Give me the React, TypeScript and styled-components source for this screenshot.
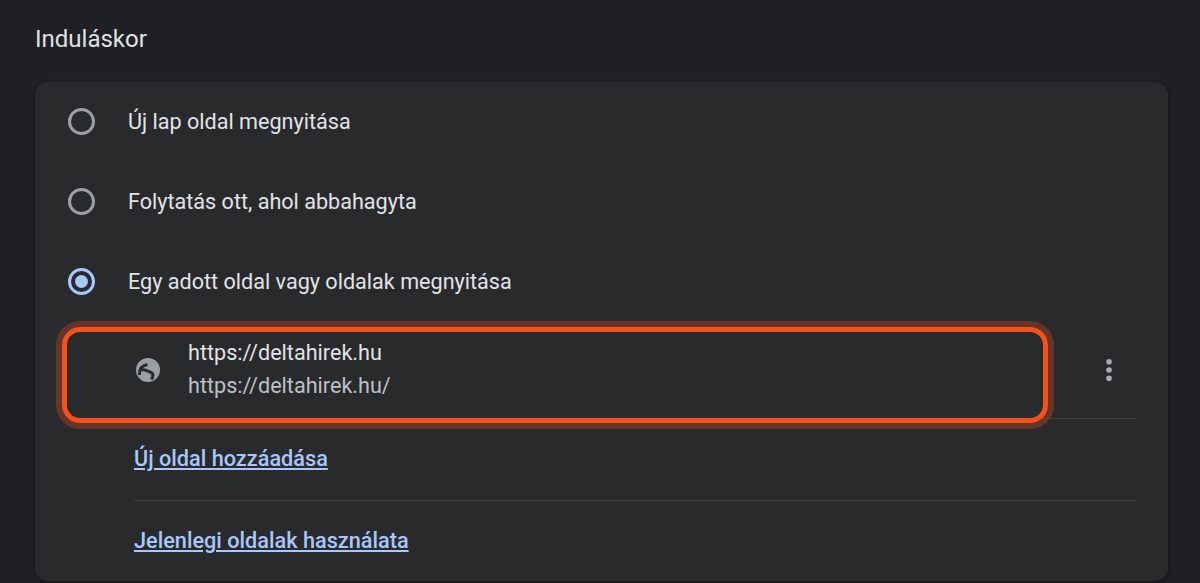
import React from 'react'
import styled, { createGlobalStyle } from 'styled-components'

const GlobalStyle = createGlobalStyle`
  html, body {
    margin: 0;
    padding: 0;
    background: #1f2023;
    overflow: hidden;
  }
  body {
    font-family: Roboto, "Liberation Sans", sans-serif;
  }
`

const Page = styled.div`
  box-sizing: border-box;
  height: 583px;
  width: 1200px;
  padding: 0 32px 0 35px;
  background: #1f2023;
  overflow: hidden;
`

const Heading = styled.h2`
  margin: 0;
  height: 82px;
  padding-top: 25px;
  box-sizing: border-box;
  color: #dfe1e5;
  font-size: 24px;
  font-weight: 400;
  line-height: 29px;
`

const Card = styled.section`
  height: 499px;
  background: #292a2c;
  border-radius: 13px;
  box-shadow: 0 1px 4px rgba(0, 0, 0, 0.45);
`

const RadioRow = styled.div`
  box-sizing: border-box;
  display: flex;
  align-items: center;
  height: 80px;
  padding: 0 0 2px 33px;
  gap: 33px;
  color: #e1e3e6;
  font-size: 21.6px;
`

const Radio = styled.span<{ $checked?: boolean }>`
  box-sizing: border-box;
  flex: none;
  width: 27px;
  height: 27px;
  border-radius: 50%;
  border: 3px solid ${p => (p.$checked ? '#a8c7fa' : '#9aa0a6')};
  display: flex;
  align-items: center;
  justify-content: center;

  &::after {
    content: '';
    display: ${p => (p.$checked ? 'block' : 'none')};
    width: 13px;
    height: 13px;
    border-radius: 50%;
    background: #a8c7fa;
  }
`

const Entry = styled.div`
  position: relative;
  display: flex;
  align-items: center;
  height: 96px;
  margin: 0 32px 0 99px;
  border-bottom: 1px solid #3f4043;
`

const Highlight = styled.div`
  position: absolute;
  left: -72px;
  right: 88px;
  top: 5px;
  height: 96px;
  box-sizing: border-box;
  border: 5px solid #f4511e;
  border-radius: 18px;
  box-shadow: 0 0 0 6px rgba(244, 81, 30, 0.3);
  pointer-events: none;
`

const Favicon = styled.svg`
  flex: none;
  width: 24px;
  height: 24px;
  margin-left: 2px;
`

const EntryText = styled.div`
  margin-left: 28px;
  padding-bottom: 3px;
  flex: 1;
`

const EntryTitle = styled.div`
  color: #e1e3e6;
  font-size: 21.6px;
  line-height: 33px;
`

const EntryUrl = styled.div`
  color: #bdc1c6;
  font-size: 21.6px;
  line-height: 33px;
`

const MoreButton = styled.svg`
  flex: none;
  width: 8px;
  height: 24px;
  margin-right: 23px;
`

const LinkRow = styled.div<{ $divided?: boolean }>`
  display: flex;
  align-items: center;
  box-sizing: border-box;
  height: ${p => (p.$divided ? '82px' : '81px')};
  padding-bottom: 2px;
  margin: 0 32px 0 99px;
  border-bottom: ${p => (p.$divided ? '1px solid #3f4043' : 'none')};
`

const ActionLink = styled.a`
  color: #a8c7fa;
  font-size: 21.7px;
  font-weight: 500;
  text-decoration: underline;
`

export default function App() {
  return (
    <Page>
      <GlobalStyle />
      <Heading>Induláskor</Heading>
      <Card>
        <RadioRow>
          <Radio />
          Új lap oldal megnyitása
        </RadioRow>
        <RadioRow>
          <Radio />
          Folytatás ott, ahol abbahagyta
        </RadioRow>
        <RadioRow>
          <Radio $checked />
          Egy adott oldal vagy oldalak megnyitása
        </RadioRow>
        <Entry>
          <Highlight />
          <Favicon viewBox="0 0 24 24">
            <circle cx="12" cy="12" r="12" fill="#9aa0a6" />
            <path
              d="M3.500 17C3 11 6 7.500 11.500 6.500M5 12C8 11 10.500 12.500 13 13.500C16.500 14.800 18.500 16 15.500 21.500"
              fill="none"
              stroke="#292a2c"
              strokeWidth="3"
            />
          </Favicon>
          <EntryText>
            <EntryTitle>https://deltahirek.hu</EntryTitle>
            <EntryUrl>https://deltahirek.hu/</EntryUrl>
          </EntryText>
          <MoreButton viewBox="0 0 8 24">
            <circle cx="4" cy="3.700" r="2.800" fill="#a9acb0" />
            <circle cx="4" cy="12" r="2.800" fill="#a9acb0" />
            <circle cx="4" cy="20.300" r="2.800" fill="#a9acb0" />
          </MoreButton>
        </Entry>
        <LinkRow $divided>
          <ActionLink href="#">Új oldal hozzáadása</ActionLink>
        </LinkRow>
        <LinkRow>
          <ActionLink href="#">Jelenlegi oldalak használata</ActionLink>
        </LinkRow>
      </Card>
    </Page>
  )
}
